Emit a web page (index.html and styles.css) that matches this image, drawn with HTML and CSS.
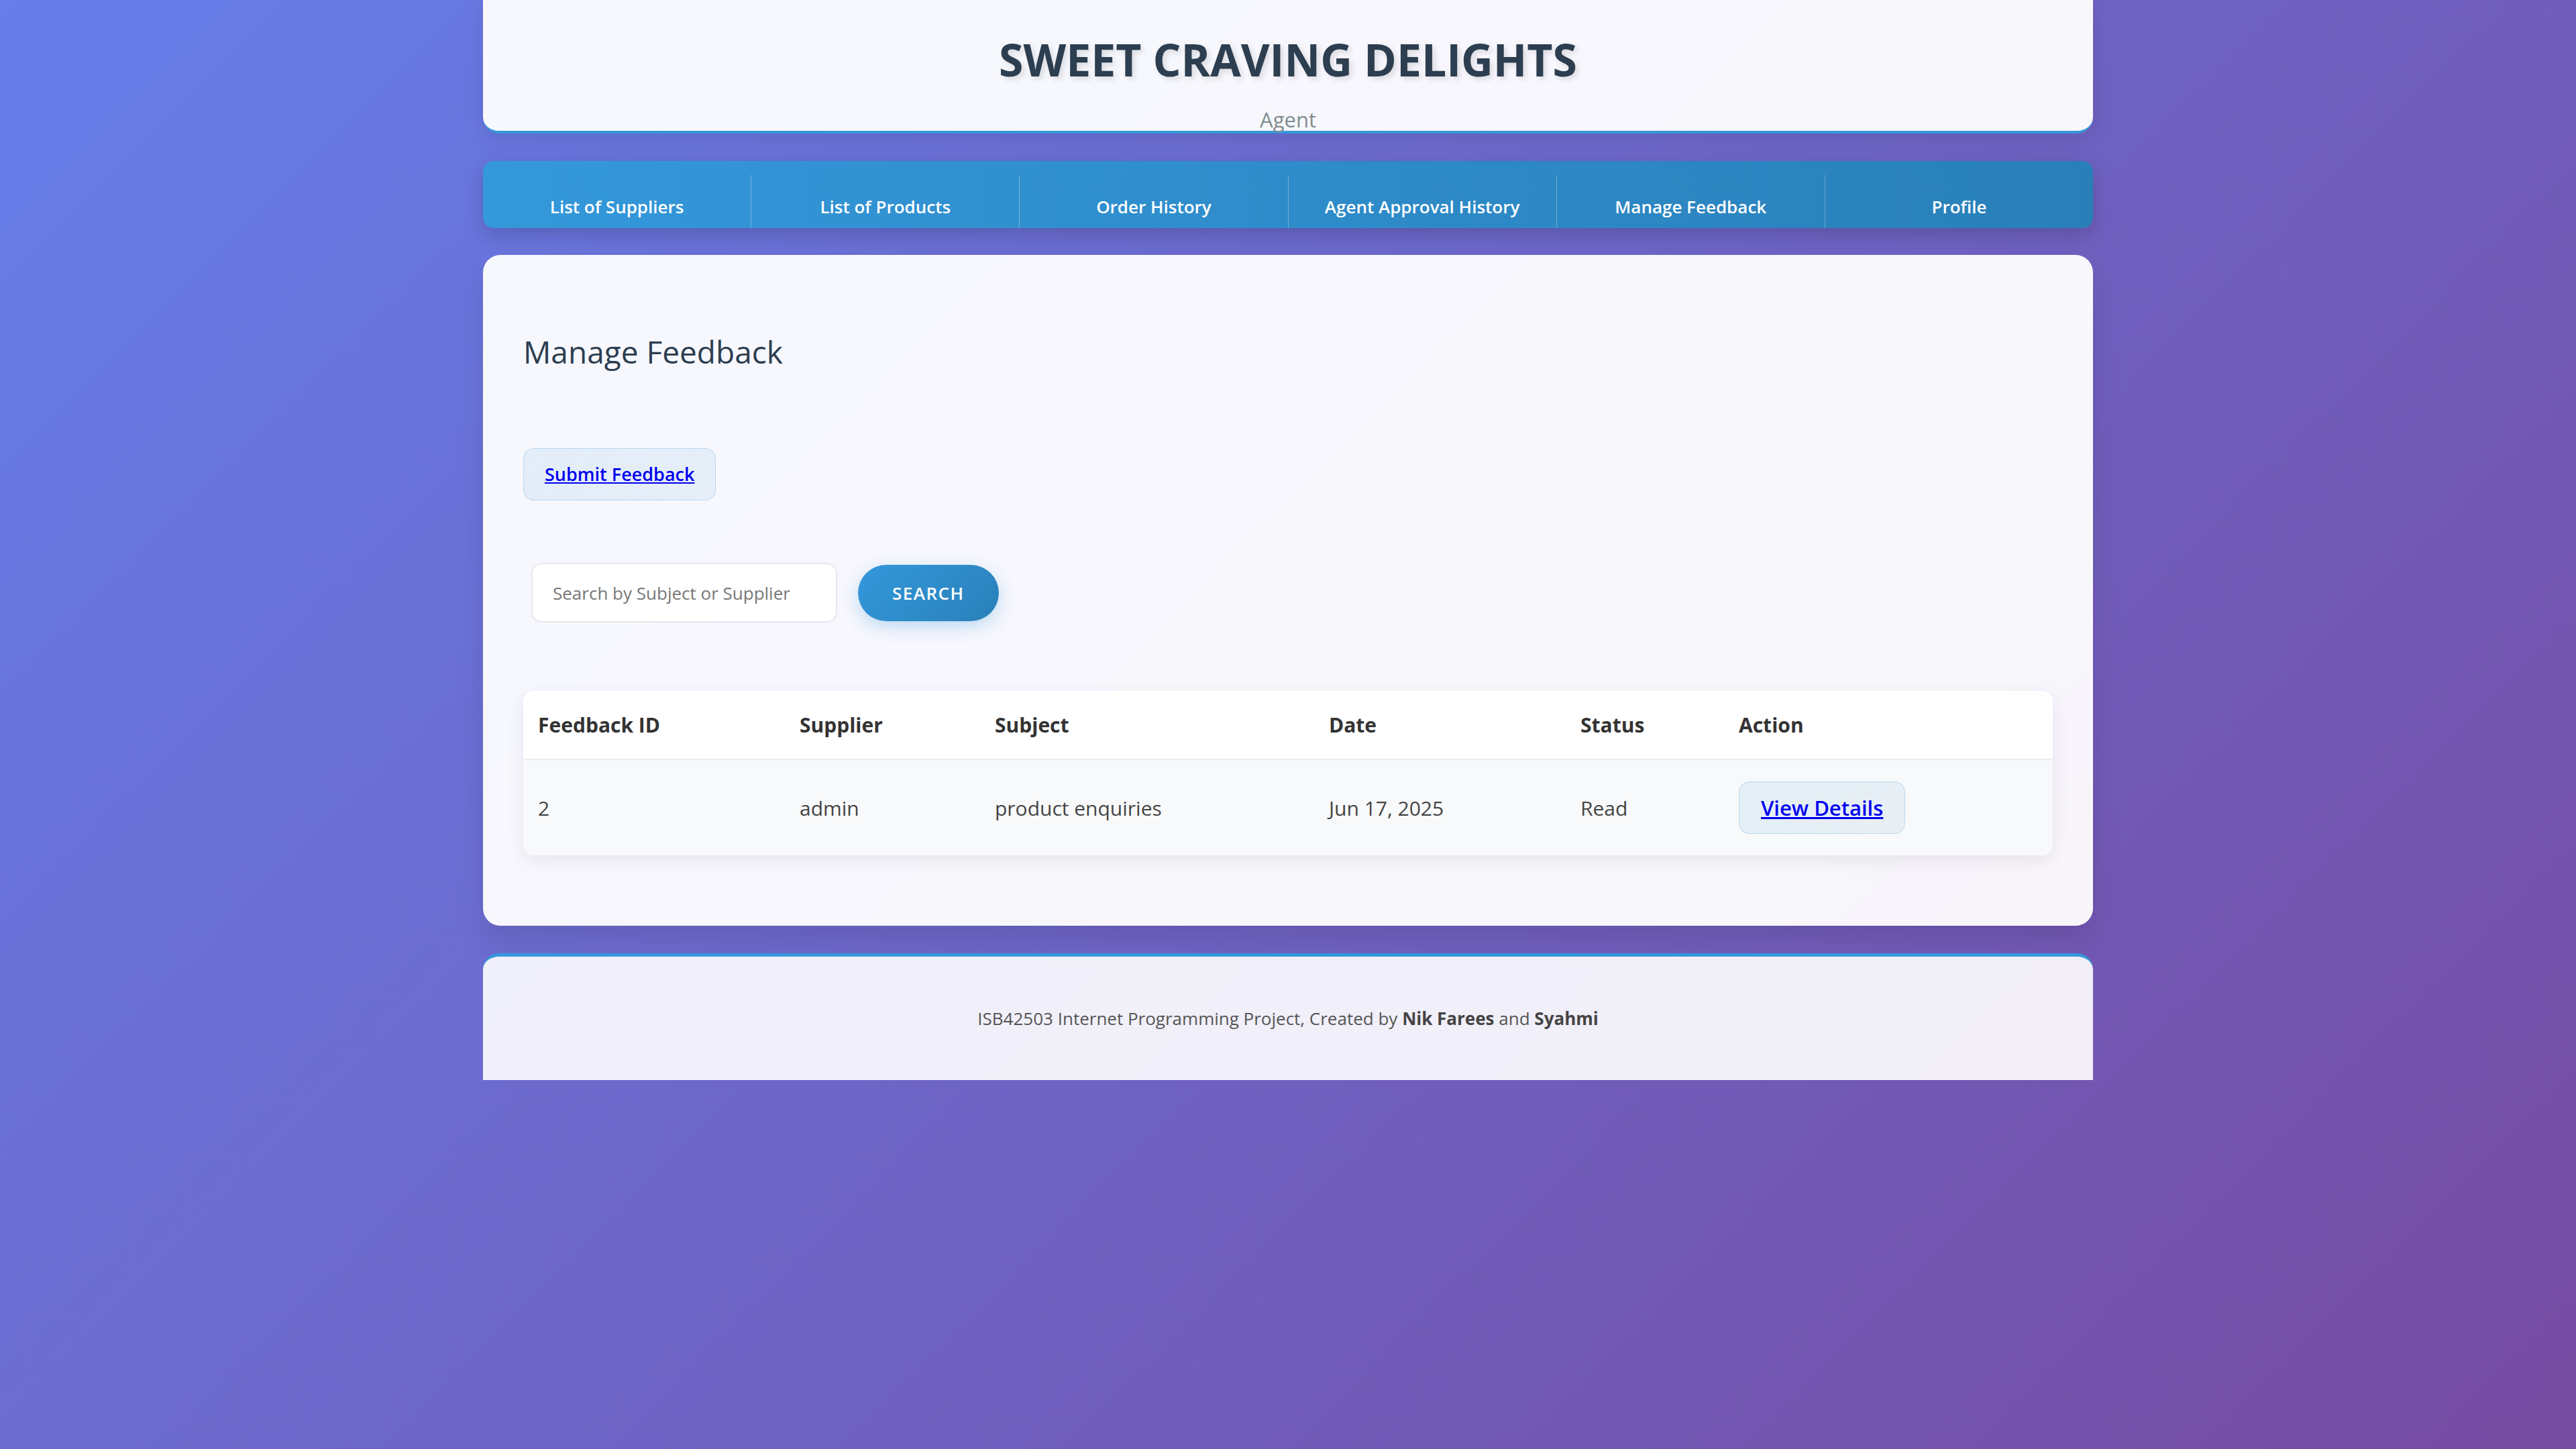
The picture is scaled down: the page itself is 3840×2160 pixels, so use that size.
FILE: index.html
```html
<!DOCTYPE html>
<html lang="en">
<head>
<meta charset="utf-8">
<title>Manage Feedback - Sweet Craving Delights</title>
<link rel="stylesheet" href="styles.css">
</head>
<body>
<div class="page">
  <header class="site-header">
    <h1 class="brand">SWEET CRAVING DELIGHTS</h1>
    <p class="role">Agent</p>
  </header>

  <nav class="main-nav">
    <ul class="nav-list">
      <li class="nav-item"><a class="nav-link" href="#">List of Suppliers</a></li>
      <li class="nav-item"><a class="nav-link" href="#">List of Products</a></li>
      <li class="nav-item"><a class="nav-link" href="#">Order History</a></li>
      <li class="nav-item"><a class="nav-link" href="#">Agent Approval History</a></li>
      <li class="nav-item"><a class="nav-link" href="#">Manage Feedback</a></li>
      <li class="nav-item"><a class="nav-link" href="#">Profile</a></li>
    </ul>
  </nav>

  <main class="card">
    <h2 class="card-title">Manage Feedback</h2>
    <div class="actions">
      <a class="soft-btn" href="#">Submit Feedback</a>
    </div>
    <form class="search-form" onsubmit="return false;">
      <input class="search-input" type="text" placeholder="Search by Subject or Supplier">
      <button class="search-btn" type="submit">Search</button>
    </form>
    <table class="data-table">
      <thead>
        <tr>
          <th class="col-id">Feedback ID</th>
          <th class="col-supplier">Supplier</th>
          <th class="col-subject">Subject</th>
          <th class="col-date">Date</th>
          <th class="col-status">Status</th>
          <th class="col-action">Action</th>
        </tr>
      </thead>
      <tbody>
        <tr>
          <td>2</td>
          <td>admin</td>
          <td>product enquiries</td>
          <td>Jun 17, 2025</td>
          <td>Read</td>
          <td><a class="soft-btn soft-btn-lg" href="#">View Details</a></td>
        </tr>
      </tbody>
    </table>
  </main>

  <footer class="site-footer">
    <p class="footer-text">ISB42503 Internet Programming Project, Created by <strong>Nik Farees</strong> and <strong>Syahmi</strong></p>
  </footer>
</div>
</body>
</html>
```

FILE: styles.css
```css
html {
  min-height: 100%;
  background: linear-gradient(135deg, #667eea 0%, #764ba2 100%);
}

body {
  margin: 0;
  font-family: "Open Sans", "Noto Sans", "Liberation Sans", sans-serif;
  color: #333;
}

.page {
  width: 2400px;
  margin: 0 auto;
}

/* Header */
.site-header {
  background: rgba(255, 255, 255, 0.95);
  border-bottom: 4px solid #3498db;
  border-radius: 0 0 24px 24px;
  padding-top: 38px;
  text-align: center;
  box-shadow: 0 8px 32px rgba(0, 0, 0, 0.1);
}

.brand {
  margin: 0;
  font-size: 66px;
  line-height: 100px;
  font-weight: 700;
  color: #2c3e50;
  text-shadow: 4px 4px 8px rgba(0, 0, 0, 0.12);
}

.role {
  margin: 20px 0 -3px;
  font-size: 31px;
  line-height: 40px;
  color: #7f8c8d;
}

/* Navigation */
.main-nav {
  margin-top: 41px;
  height: 100px;
  box-sizing: border-box;
  padding-top: 21px;
  border-radius: 16px;
  background: linear-gradient(90deg, #3498db 0%, #2980b9 100%);
  box-shadow: 0 10px 30px rgba(0, 0, 0, 0.18);
}

.nav-list {
  display: flex;
  margin: 0;
  padding: 0;
  list-style: none;
}

.nav-item {
  flex: 1 1 0;
  height: 79px;
  box-sizing: border-box;
  padding-top: 29px;
  text-align: center;
  border-right: 1px solid rgba(255, 255, 255, 0.3);
}

.nav-item:last-child {
  border-right: none;
}

.nav-link {
  color: #fff;
  text-decoration: none;
  font-size: 26px;
  line-height: 36px;
  font-weight: 600;
}

/* Main card */
.card {
  display: block;
  margin-top: 40px;
  padding: 60px;
  border-radius: 26px;
  background: rgba(255, 255, 255, 0.95);
  box-shadow: 0 20px 40px rgba(0, 0, 0, 0.1);
}

.card-title {
  margin: 54px 0 0;
  font-size: 46px;
  line-height: 60px;
  font-weight: 500;
  color: #2c3e50;
}

.actions {
  margin-top: 114px;
}

.soft-btn {
  display: inline-block;
  padding: 18px 31px;
  font-size: 27px;
  line-height: 40px;
  font-weight: 600;
  color: #0000ee;
  text-decoration: underline;
  white-space: nowrap;
  background: linear-gradient(135deg, rgba(52, 152, 219, 0.1), rgba(41, 128, 185, 0.08));
  border: 1px solid rgba(52, 152, 219, 0.25);
  border-radius: 16px;
}

.soft-btn-lg {
  padding: 17px 32px;
  font-size: 31px;
  line-height: 42px;
}

/* Search */
.search-form {
  display: flex;
  align-items: center;
  margin: 93px 0 0 12px;
}

.search-input {
  width: 456px;
  height: 89px;
  box-sizing: border-box;
  padding: 0 30px;
  border: 2px solid #e6e8ec;
  border-radius: 16px;
  background: #fff;
  font-family: inherit;
  font-size: 26px;
  color: #333;
  outline: none;
}

.search-input::placeholder {
  color: #777;
}

.search-btn {
  margin-left: 31px;
  height: 84px;
  padding: 0 51px;
  border: none;
  border-radius: 42px;
  background: linear-gradient(135deg, #3498db 0%, #2980b9 100%);
  color: #fff;
  font-family: inherit;
  font-size: 26px;
  font-weight: 600;
  letter-spacing: 1.5px;
  text-transform: uppercase;
  box-shadow: 0 8px 24px rgba(52, 152, 219, 0.3);
}

/* Table */
.data-table {
  width: 100%;
  margin: 102px 0 45px;
  table-layout: fixed;
  border-collapse: separate;
  border-spacing: 0;
  border-radius: 16px;
  overflow: hidden;
  background: #fff;
  box-shadow: 0 8px 28px rgba(0, 0, 0, 0.08);
}

.data-table th {
  padding: 30px 22px;
  text-align: left;
  font-size: 30px;
  line-height: 41px;
  font-weight: 700;
  color: #333;
  background: #fff;
  border-bottom: 2px solid #eceef2;
}

.data-table td {
  padding: 32px 22px;
  font-size: 30px;
  line-height: 41px;
  color: #444;
  background: #f8f9fa;
  vertical-align: middle;
}

.col-id { width: 346px; }
.col-supplier { width: 247px; }
.col-subject { width: 454px; }
.col-date { width: 331px; }
.col-status { width: 192px; }
.col-action { width: auto; }

/* Footer */
.site-footer {
  margin-top: 41px;
  padding: 74px 0;
  border-top: 5px solid #3498db;
  border-radius: 24px 24px 0 0;
  background: rgba(255, 255, 255, 0.9);
  text-align: center;
}

.footer-text {
  margin: 0;
  font-size: 26px;
  line-height: 36px;
  color: #555;
}

.footer-text strong {
  font-weight: 700;
  color: #444;
}
```
